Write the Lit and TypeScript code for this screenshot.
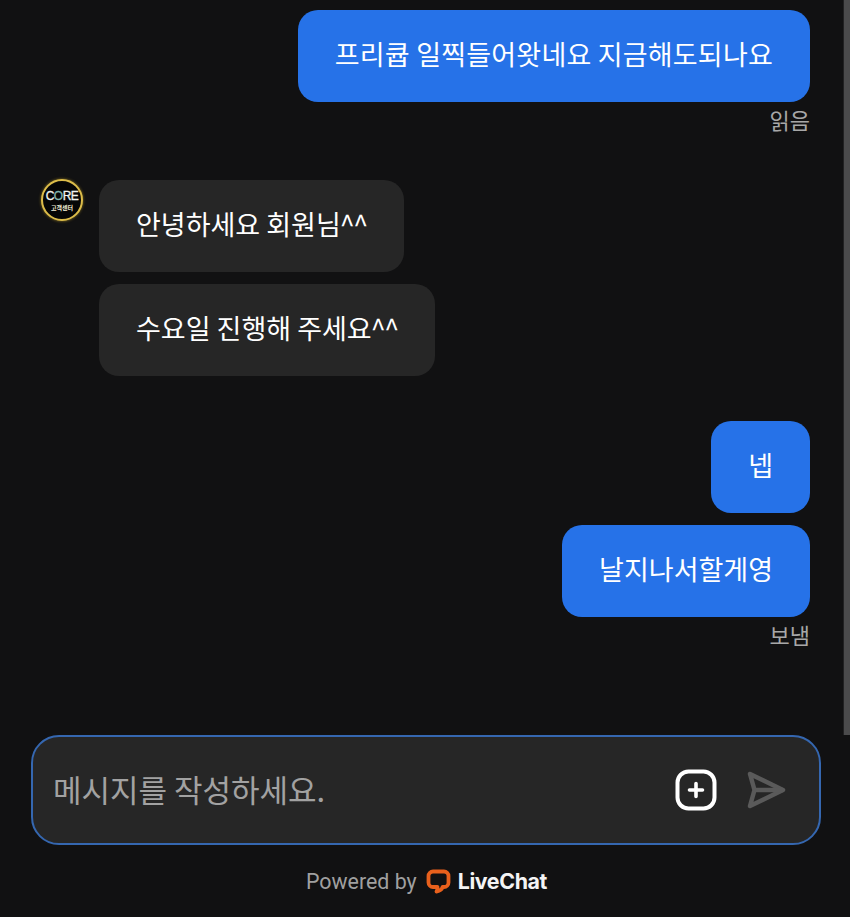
import { LitElement, html, css } from 'lit';
import { customElement } from 'lit/decorators.js';

@customElement('app-root')
export class AppRoot extends LitElement {
  static styles = css`
    :host {
      display: flex;
      flex-direction: column;
      box-sizing: border-box;
      width: 100%;
      height: 917px;
      overflow: hidden;
      background: #111112;
      color: #fff;
      font-family: 'Noto Sans CJK KR', 'Noto Sans', sans-serif;
    }

    .scroller {
      flex: 1;
      display: flex;
    }

    .log {
      flex: 1;
      display: flex;
      flex-direction: column;
      padding: 10px 33px 0 41px;
    }

    .thumb {
      width: 6px;
      border-left: 1px solid #222223;
      background: #4b4b4c;
    }

    .group {
      display: flex;
      flex-direction: column;
      gap: 12px;
    }

    .group.me {
      align-items: flex-end;
    }

    .group.them {
      margin-top: 46px;
      margin-left: 58px;
      position: relative;
      align-items: flex-start;
    }

    .group.me.second {
      margin-top: 45px;
    }

    .bubble {
      box-sizing: border-box;
      height: 92px;
      padding: 0 37px 5px;
      display: flex;
      align-items: center;
      border-radius: 20px;
      font-size: 27px;
      line-height: 38px;
      white-space: nowrap;
    }

    .bubble.wide {
      letter-spacing: 0.2px;
    }

    .bubble i {
      font-style: normal;
      letter-spacing: -1.5px;
      margin-left: -1px;
    }

    .me .bubble {
      background: #2672e8;
    }

    .them .bubble {
      background: #262626;
    }

    .status {
      margin-top: -10px;
      font-size: 22px;
      line-height: 30px;
      color: #a8a8a8;
    }

    .avatar {
      position: absolute;
      left: -58px;
      top: -1px;
      width: 42px;
      height: 42px;
      box-sizing: border-box;
      border: 2.5px solid #dcbc4a;
      border-radius: 50%;
      background: #060606;
      display: flex;
      flex-direction: column;
      align-items: center;
      justify-content: center;
      box-shadow: 0 0 3px #8a7420;
    }

    .avatar b {
      font: 400 12px/14px 'Liberation Sans', sans-serif;
      letter-spacing: -0.5px;
      -webkit-text-stroke: 0.3px #f2f5f0;
      color: #f2f5f0;
    }

    .avatar b em {
      font-style: normal;
      color: #7fb4ad;
      -webkit-text-stroke: 0.3px #7fb4ad;
    }

    .avatar span {
      font-size: 6px;
      line-height: 9px;
      font-weight: 700;
      color: #f4efd8;
    }

    .composer {
      box-sizing: border-box;
      height: 110px;
      margin: 0 29px 0 31px;
      padding: 0 33px 0 20px;
      display: flex;
      align-items: center;
      border: 2px solid #3567b0;
      border-radius: 28px;
      background: #262626;
    }

    .placeholder {
      flex: 1;
      margin-top: -4px;
      font-size: 31px;
      color: #a2a2a2;
    }

    .composer svg {
      display: block;
    }

    .add {
      margin-right: 1px;
    }

    .send {
      margin-left: 28px;
    }

    .footer {
      height: 72px;
      padding-left: 3px;
      display: flex;
      align-items: center;
      justify-content: center;
      gap: 9px;
      font-family: Roboto, sans-serif;
      font-size: 21.4px;
      color: #a0a0a0;
    }

    .brand {
      display: flex;
      align-items: center;
      gap: 7px;
      font-family: Inter, sans-serif;
      font-weight: 700;
      font-size: 21.4px;
      letter-spacing: -0.4px;
      color: #f4f4f4;
    }
  `;

  protected render() {
    return html`
      <div class="scroller">
        <div class="log">
          <div class="group me">
            <div class="bubble wide">프리큡 일찍들어왓네요 지금해도되나요</div>
            <div class="status">읽음</div>
          </div>
          <div class="group them">
            <div class="avatar"><b>C<em>O</em>RE</b><span>고객센터</span></div>
            <div class="bubble">안녕하세요 회원님<i>^^</i></div>
            <div class="bubble">수요일 진행해 주세요<i>^^</i></div>
          </div>
          <div class="group me second">
            <div class="bubble">넵</div>
            <div class="bubble">날지나서할게영</div>
            <div class="status">보냄</div>
          </div>
        </div>
        <div class="thumb"></div>
      </div>
      <div class="composer">
        <div class="placeholder">메시지를 작성하세요.</div>
        <svg class="add" width="42" height="42" viewBox="0 0 42 42" fill="none" stroke="#fff" stroke-linecap="round">
          <rect x="2.500" y="2.500" width="37" height="37" rx="11" stroke-width="4"></rect>
          <path d="M21 14.500v13M14.500 21h13" stroke-width="3.600"></path>
        </svg>
        <svg class="send" width="40" height="38" viewBox="0 0 40 38" fill="none" stroke="#5a5a5a" stroke-width="4.500" stroke-linejoin="round">
          <path d="M4 3 37 19 4 35 8.500 19Z"></path>
          <path d="M8.500 19H37"></path>
        </svg>
      </div>
      <div class="footer">
        <span>Powered by</span>
        <span class="brand">
          <svg width="25" height="25" viewBox="0 0 25 25" fill="none">
            <path d="M7 2.500h11a4.500 4.500 0 0 1 4.500 4.500v6.500a4.500 4.500 0 0 1-4.500 4.500h-1.500c-.5 2.500-2.500 4-6 4.500 1-1.500 1.300-3 1-4.500H7a4.500 4.500 0 0 1-4.500-4.500V7A4.500 4.500 0 0 1 7 2.500Z" stroke="#e8601c" stroke-width="3.800" stroke-linejoin="round"></path>
          </svg>
          LiveChat
        </span>
      </div>
    `;
  }
}

declare global {
  interface HTMLElementTagNameMap {
    'app-root': AppRoot;
  }
}
